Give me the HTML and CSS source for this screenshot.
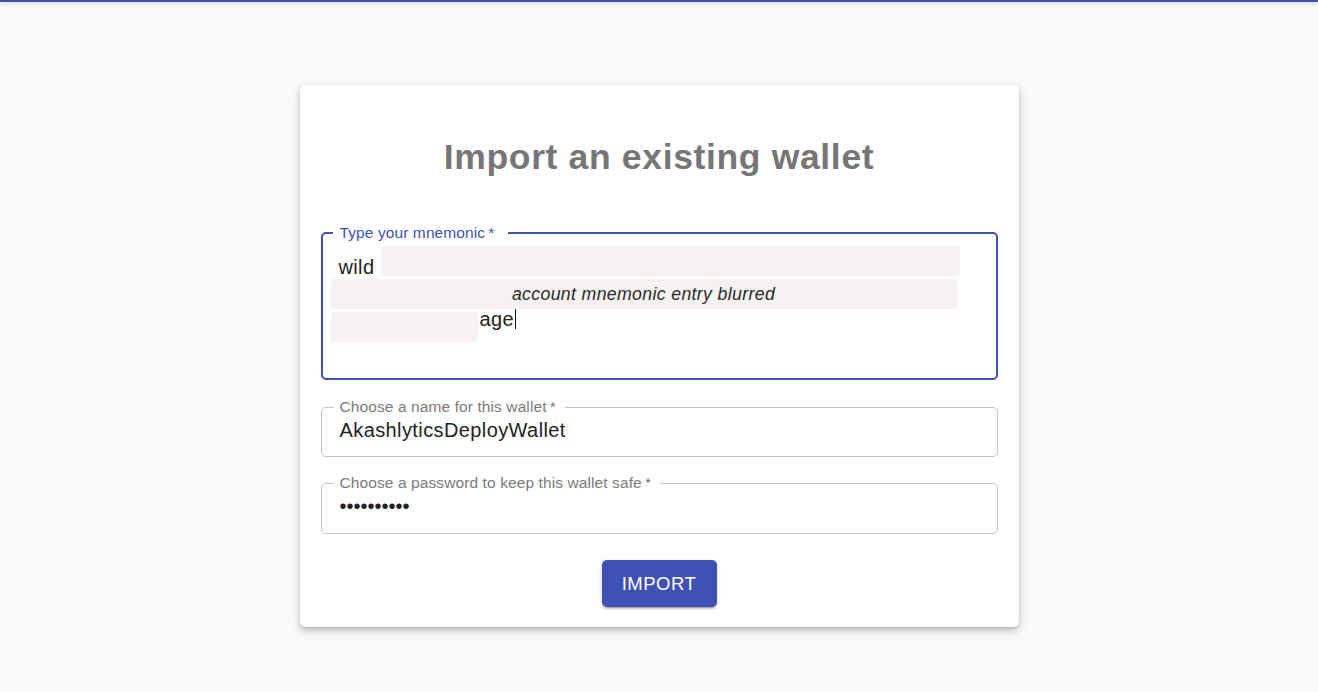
FILE: index.html
```html
<!DOCTYPE html>
<html lang="en">
<head>
<meta charset="utf-8">
<title>Import an existing wallet</title>
<link rel="stylesheet" href="styles.css">
</head>
<body>
<div class="topbar"></div>
<main class="page">
  <section class="card">
    <h1 class="title">Import an existing wallet</h1>

    <fieldset class="field field-focused">
      <legend class="field-label">Type your mnemonic&thinsp;*</legend>
      <div class="mnemonic">
        <div class="line">wild</div>
        <div class="line">&nbsp;</div>
        <div class="line"><span class="spacer"></span>age<span class="caret"></span></div>
        <div class="line">&nbsp;</div>
        <div class="redact redact-1"></div>
        <div class="redact redact-2"><span>account mnemonic entry blurred</span></div>
        <div class="redact redact-3"></div>
      </div>
    </fieldset>

    <fieldset class="field field-small">
      <legend class="field-label">Choose a name for this wallet&thinsp;*</legend>
      <div class="value">AkashlyticsDeployWallet</div>
    </fieldset>

    <fieldset class="field field-small field-password">
      <legend class="field-label">Choose a password to keep this wallet safe&thinsp;*</legend>
      <div class="value dots">••••••••••</div>
    </fieldset>

    <button class="btn" type="button">Import</button>
  </section>
</main>
</body>
</html>
```
FILE: styles.css
```css
* { box-sizing: border-box; }

html, body {
  margin: 0;
  padding: 0;
}

body {
  background: #f9f9f9;
  font-family: "Liberation Sans", Arial, sans-serif;
  color: #222;
  min-height: 692px;
}

.topbar {
  height: 2px;
  background: #3f51b5;
  box-shadow: 0 1px 5px rgba(0, 0, 0, 0.25);
}

.page {
  display: flex;
  justify-content: center;
}

.card {
  width: 719px;
  margin-top: 83px;
  padding: 51px 21px 20px;
  background: #fff;
  border-radius: 5px;
  box-shadow: 0 4px 9px rgba(0, 0, 0, 0.22), 0 1px 3px rgba(0, 0, 0, 0.12);
  display: flex;
  flex-direction: column;
}

.title {
  margin: 0 0 47px;
  font-size: 35.5px;
  line-height: 42px;
  letter-spacing: 0.65px;
  font-weight: 700;
  color: #767676;
  text-align: center;
}

.field {
  margin: 0;
  border: 1px solid #c4c4c4;
  border-radius: 5px;
  padding: 2px 16px 13px 18px;
  min-width: 0;
}

.field-label {
  font-size: 15.5px;
  line-height: 16px;
  color: #7b7b7b;
  padding: 0 9px 0 6px;
  margin-left: -6px;
  letter-spacing: 0.1px;
}

.field-focused {
  border: 2px solid #3f51b5;
  padding: 13px 16px 20px 16px;
}

.field-focused .field-label {
  color: #3f51b5;
  padding: 0 13px 0 7px;
  margin-left: -6px;
}

.field-small {
  margin-top: 19px;
}

.field-password {
  margin-top: 18px;
  padding-bottom: 14px;
}

.mnemonic {
  position: relative;
  font-size: 20px;
  line-height: 26px;
  letter-spacing: 0.35px;
  color: #222;
}

.line {
  height: 26px;
  white-space: nowrap;
}

.spacer {
  display: inline-block;
  width: 141px;
}

.caret {
  display: inline-block;
  width: 1px;
  height: 20px;
  background: #111;
  margin-left: 1px;
  vertical-align: -3px;
}

.redact {
  position: absolute;
  height: 30px;
  background: #f5f2f1;
  border-radius: 3px;
}

.redact-1 { left: 42px; top: -8px; width: 579px; }
.redact-2 {
  left: -8px;
  top: 25px;
  width: 626px;
  display: flex;
  align-items: center;
  justify-content: center;
}
.redact-2 span {
  font-style: italic;
  font-size: 17.7px;
  letter-spacing: 0.35px;
  color: #2a2a2a;
}
.redact-3 { left: -8px; top: 58px; width: 147px; }

.value {
  font-size: 20px;
  line-height: 26px;
  letter-spacing: 0.4px;
  color: #222;
  white-space: nowrap;
}

.dots {
  letter-spacing: 0;
  font-size: 20px;
}

.btn {
  align-self: center;
  margin-top: 26px;
  width: 115px;
  height: 47px;
  border: none;
  border-radius: 5px;
  background: #3f51b5;
  color: #fff;
  font-family: "Liberation Sans", Arial, sans-serif;
  font-size: 18.5px;
  letter-spacing: 0.5px;
  text-transform: uppercase;
  box-shadow: 0 3px 1px -2px rgba(0, 0, 0, 0.2), 0 2px 2px 0 rgba(0, 0, 0, 0.14), 0 1px 5px 0 rgba(0, 0, 0, 0.12);
  cursor: pointer;
  padding: 0;
}
```
